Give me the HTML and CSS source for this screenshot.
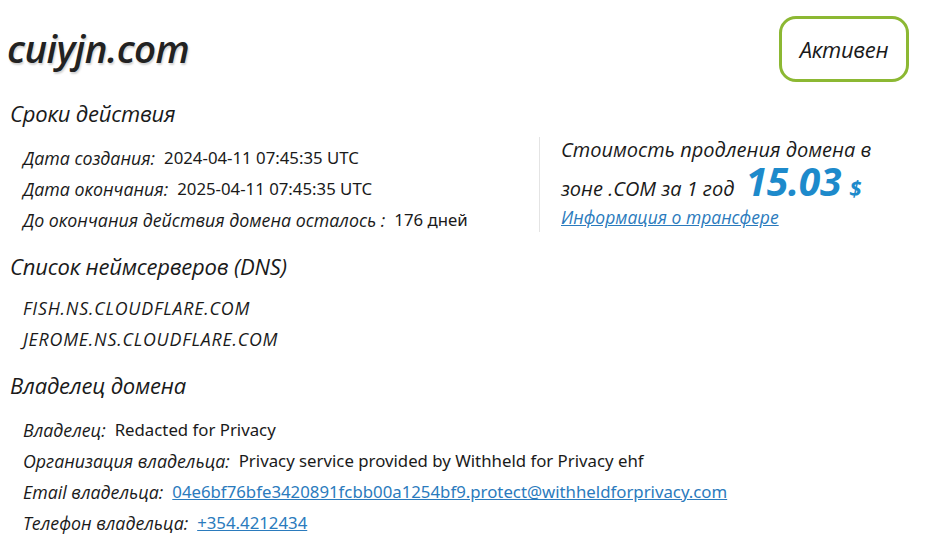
FILE: index.html
```html
<!DOCTYPE html>
<html lang="ru">
<head>
<meta charset="utf-8">
<title>cuiyjn.com</title>
<link rel="stylesheet" href="styles.css">
</head>
<body>
<div class="page">
  <header class="head">
    <h1 class="domain">cuiyjn.com</h1>
    <div class="badge">Активен</div>
  </header>

  <h2 class="sec">Сроки действия</h2>
  <div class="split">
    <div class="rows">
      <div class="row"><span class="lbl">Дата создания:</span><span class="val">2024-04-11 07:45:35 UTC</span></div>
      <div class="row"><span class="lbl">Дата окончания:</span><span class="val">2025-04-11 07:45:35 UTC</span></div>
      <div class="row"><span class="lbl">До окончания действия домена осталось :</span><span class="val">176 дней</span></div>
    </div>
    <div class="price">
      <div class="ptext">Стоимость продления домена в<br>зоне .COM за 1 год <span class="sum">15.03</span><span class="cur">$</span></div>
      <a class="plink" href="#">Информация о трансфере</a>
    </div>
  </div>

  <h2 class="sec">Список неймсерверов (DNS)</h2>
  <div class="rows">
    <div class="row"><span class="lbl caps">FISH.NS.CLOUDFLARE.COM</span></div>
    <div class="row"><span class="lbl caps">JEROME.NS.CLOUDFLARE.COM</span></div>
  </div>

  <h2 class="sec">Владелец домена</h2>
  <div class="rows rows-owner">
    <div class="row"><span class="lbl">Владелец:</span><span class="val">Redacted for Privacy</span></div>
    <div class="row"><span class="lbl">Организация владельца:</span><span class="val">Privacy service provided by Withheld for Privacy ehf</span></div>
    <div class="row"><span class="lbl">Email владельца:</span><a class="val link" href="#">04e6bf76bfe3420891fcbb00a1254bf9.protect@withheldforprivacy.com</a></div>
    <div class="row"><span class="lbl">Телефон владельца:</span><a class="val link" href="#">+354.4212434</a></div>
  </div>
</div>
</body>
</html>
```
FILE: styles.css
```css
html, body { margin: 0; padding: 0; background: #fff; }
body { color: #1a1a1a; font-family: "Open Sans", "Noto Sans", sans-serif; }
.page { padding: 16px 17px 0 7px; }
.head { display: flex; justify-content: space-between; align-items: flex-start; height: 66px; }
.domain {
  margin: 6px 0 0 0;
  font-size: 38.5px; font-weight: 600; font-style: italic;
  letter-spacing: -0.6px; line-height: 52px; color: #222;
  text-shadow: 1px 2px 2px rgba(0,0,0,0.18);
}
.badge {
  width: 124px; height: 60px; box-sizing: content-box;
  border: 3px solid #8cb833; border-radius: 17px;
  display: flex; align-items: center; justify-content: center;
  font-style: italic; font-size: 22px; color: #1a1a1a; letter-spacing: -0.3px;
}
.sec {
  margin: 17px 0 0 3px; font-weight: 400; font-style: italic;
  font-size: 22px; line-height: 28px; color: #1a1a1a; letter-spacing: -0.2px;
}
.split { display: flex; margin-top: 15px; }
.rows { padding-left: 16px; display: flex; flex-direction: column; margin-top: 12px; }
.rows-owner { margin-top: 15px; }
.split .rows { width: 516px; margin-top: 0; }
.row { height: 31px; display: flex; align-items: center; white-space: nowrap; }
.lbl { font-style: italic; font-size: 17.8px; margin-right: 9px; }
.caps { letter-spacing: 0.8px; }
.val { font-family: "Noto Sans", sans-serif; font-size: 16.8px; }
.link { color: #2b7bbd; text-decoration: underline; }
.price { border-left: 1px solid #e4e4e4; padding: 0 0 4px 21px; margin-top: -5px; height: 91px; }
.ptext { font-style: italic; font-size: 20px; line-height: 31px; white-space: nowrap; margin-top: -3px; }
.sum { display: inline-block; line-height: 31px; color: #1d8acb; font-size: 39px; font-weight: 700; font-style: italic; margin-left: 6px; letter-spacing: -0.3px; }
.cur { color: #1d8acb; font-size: 22px; font-weight: 700; font-style: italic; margin-left: 8px; }
.plink { display: block; color: #2b7bbd; font-style: italic; font-size: 17.5px; line-height: 24px; margin-top: 1px; }
```
